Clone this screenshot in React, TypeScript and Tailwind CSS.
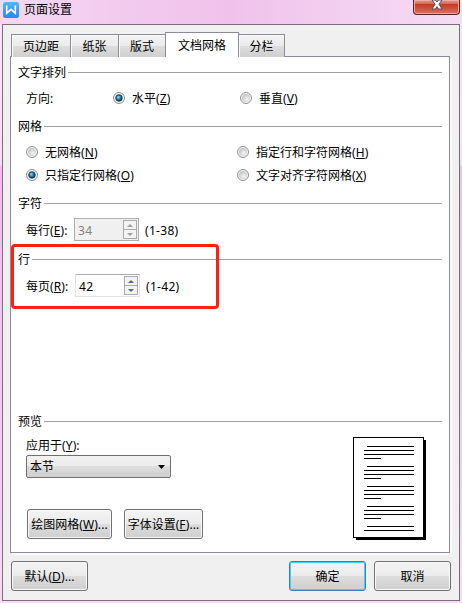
import type { ReactNode } from "react";

function Key({ text, k, tail = "" }: { text: string; k: string; tail?: string }) {
  return (
    <span className="whitespace-nowrap">
      {text}<span className="tracking-[0.1px]">(<span className="underline decoration-1 underline-offset-1">{k}</span>){tail}</span>
    </span>
  );
}

function Group({ title }: { title: string }) {
  return (
    <div className="flex h-4 items-center pr-[7px] pl-[7px]">
      <span className="shrink-0 pt-0.5 whitespace-nowrap">{title}</span>
      <div className="ml-0.5 h-px flex-1 bg-[#a0a0a0]" />
    </div>
  );
}

function Radio({ on = false, children }: { on?: boolean; children: ReactNode }) {
  return (
    <div className="flex h-4 items-center gap-[7px]">
      <svg width="12" height="12" viewBox="0 0 12 12" className="shrink-0">
        <defs>
          <radialGradient id="off" cx="60%" cy="65%" r="60%">
            <stop offset="0" stopColor="#f4f4f4" />
            <stop offset="1" stopColor="#c4c8cc" />
          </radialGradient>
          <radialGradient id="on" cx="40%" cy="38%" r="60%">
            <stop offset="0" stopColor="#9be4f8" />
            <stop offset="0.5" stopColor="#2b86b0" />
            <stop offset="1" stopColor="#0b3554" />
          </radialGradient>
        </defs>
        <circle cx="6" cy="6" r="5.5" fill="#f6f6f6" stroke="#8e8f8f" />
        <circle cx="6" cy="6" r="4" fill="url(#off)" />
        {on && <circle cx="6" cy="6" r="3.2" fill="url(#on)" stroke="#17374f" strokeWidth="0.8" />}
      </svg>
      <span className="pt-0.5">{children}</span>
    </div>
  );
}

function Tab({ className, children }: { className: string; children: ReactNode }) {
  return (
    <div
      className={`flex h-[23px] items-center justify-center border-t border-r border-[#8c8c96] bg-[linear-gradient(#f3f3f3,#ebebeb_49%,#dddddd_50%,#cfcfcf)] pt-0.5 shadow-[inset_1px_1px_0_#fafafa] ${className}`}
    >
      {children}
    </div>
  );
}

function Button({ className, children }: { className: string; children: ReactNode }) {
  return (
    <div
      className={`flex h-[30px] items-center justify-center rounded-[3px] border bg-[linear-gradient(#f3f3f3,#ebebeb_49%,#dddddd_50%,#cfcfcf)] pt-px ${className}`}
    >
      {children}
    </div>
  );
}

function Spinner({ value, disabled = false }: { value: string; disabled?: boolean }) {
  const color = disabled ? "#a0a0a0" : "#4a63b5";
  return (
    <div
      className={`flex h-[23px] w-[65px] items-center justify-between border pr-px pl-[3px] ${disabled ? "border-[#afafaf] bg-[#f0f0f0] text-[#838383]" : "border-[#e2e3ea] border-t-[#abadb3] bg-white"}`}
    >
      <span className="pt-0.5 tracking-[0.3px]">{value}</span>
      <div className="flex h-[19px] w-[14px] flex-col border border-[#ababab] bg-[#f3f3f3]">
        <div className="flex flex-1 items-center justify-center border-b border-[#ababab]">
          <svg width="6" height="3" viewBox="0 0 6 3"><path d="M0 3 3 0 6 3Z" fill={color} /></svg>
        </div>
        <div className="flex flex-1 items-center justify-center">
          <svg width="6" height="3" viewBox="0 0 6 3"><path d="M0 0h6L3 3Z" fill={color} /></svg>
        </div>
      </div>
    </div>
  );
}

function PagePreview() {
  const blocks = [0, 1, 2, 3, 4];
  return (
    <svg width="73" height="103" viewBox="0 0 73 103" shapeRendering="crispEdges">
      <rect x="3" y="3" width="70" height="100" fill="#000" />
      <rect x="0.5" y="0.5" width="70" height="100" fill="#fff" stroke="#000" />
      {blocks.map((b) => (
        <g key={b} transform={`translate(0 ${b * 20})`}>
          <rect x="14" y="9" width="47" height="1" />
          <rect x="11" y="13" width="50" height="1" />
          {b < 4 && <rect x="11" y="17" width="50" height="1" />}
          {b < 4 && <rect x="11" y="21" width="17" height="1" />}
        </g>
      ))}
    </svg>
  );
}

export default function App() {
  return (
    <div className="relative flex h-[603px] w-[462px] flex-col overflow-hidden bg-[linear-gradient(#f3cdf0,#f6d5f4_24px,#f8e4f7_25px,#f8dcf5_165px,#f3bdeb_166px,#f5cdf0_480px,#f7dcf5)] px-0.5 pb-0.5 font-['Noto_Sans','Noto_Sans_CJK_SC',sans-serif] text-[12px] leading-4 text-black">
      <div className="-mx-0.5 flex h-6 shrink-0 items-start justify-between bg-[linear-gradient(90deg,#f5d8f3,#f3cbef_25%,#f0c2eb_50%,#f2caef_65%,#f5dcf4)] pr-[2px] pl-[3px]">
        <div className="flex items-center gap-[5px] pt-0.5">
          <svg width="16" height="16" viewBox="0 0 16 16">
            <defs>
              <linearGradient id="logo" x1="0" y1="0" x2="0" y2="1">
                <stop offset="0" stopColor="#54b5fb" />
                <stop offset="1" stopColor="#2788f5" />
              </linearGradient>
            </defs>
            <rect width="16" height="16" rx="2.5" fill="url(#logo)" />
            <path d="M3.700 3.500v7.700L8 7.400l4.300 3.800V3.500" fill="none" stroke="#fff" strokeWidth="1.600" />
          </svg>
          <span className="whitespace-nowrap">页面设置</span>
        </div>
        <div className="flex h-[15px] w-[47px] justify-center rounded-b-[4px] border border-t-0 border-[#592229] bg-[linear-gradient(#e29b92,#cf6655_30%,#c23a24_32%,#df7160)] shadow-[inset_0_0_0_1px_#f0a99f]">
          <svg width="12" height="11" viewBox="0 0 12 11">
            <path d="M1 0h3.500L6 2 7.500 0H11L8 4.200 11 9H7.500L6 6.700 4.500 9H1L4 4.200Z" fill="#f7f7f7" stroke="#515465" />
          </svg>
        </div>
      </div>

      <div className="flex flex-1 flex-col border border-[#7d6c80] bg-[#f0f0f0] pr-2 pl-[7px]">
        <div className="relative z-10 -mb-px flex h-8 items-end pl-px">
          <Tab className="w-[60px] border-l">页边距</Tab>
          <Tab className="w-12">纸张</Tab>
          <Tab className="w-[46px] border-r-0">版式</Tab>
          <div className="flex h-[25px] w-[74px] items-center justify-center border border-b-0 border-[#8c8c96] bg-white pt-0.5">文档网格</div>
          <Tab className="w-[46px]">分栏</Tab>
        </div>

        <div className="flex h-[497px] w-[440px] flex-col border border-[#8c8c96] bg-white pt-[7px] shadow-[2px_2px_0_#fafafa]">
          <Group title="文字排列" />
          <div className="mt-2.5 flex pl-[15px]">
            <div className="h-4 w-[87px] pt-px">方向:</div>
            <div className="w-[127px]"><Radio on><Key text="水平" k="Z" /></Radio></div>
            <Radio><Key text="垂直" k="V" /></Radio>
          </div>
          <div className="mt-3"><Group title="网格" /></div>
          <div className="mt-2.5 grid grid-cols-[211px_1fr] gap-y-[7px] pl-[15px]">
            <Radio><Key text="无网格" k="N" /></Radio>
            <Radio><Key text="指定行和字符网格" k="H" /></Radio>
            <Radio on><Key text="只指定行网格" k="O" /></Radio>
            <Radio><Key text="文字对齐字符网格" k="X" /></Radio>
          </div>
          <div className="mt-3"><Group title="字符" /></div>
          <div className="mt-[7px] flex h-[23px] items-center pl-[15px]">
            <div className="w-12 pt-0.5"><Key text="每行" k="E" tail=":" /></div>
            <Spinner value="34" disabled />
            <span className="ml-1.5 pt-0.5 tracking-[0.3px]">(1-38)</span>
          </div>
          <div className="mt-2.5"><Group title="行" /></div>
          <div className="mt-[7px] flex h-[23px] items-center pl-[15px]">
            <div className="w-[49px] pt-0.5"><Key text="每页" k="R" tail=":" /></div>
            <Spinner value="42" />
            <span className="ml-1.5 pt-0.5 tracking-[0.3px]">(1-42)</span>
          </div>
          <div className="mt-[116px]"><Group title="预览" /></div>
          <div className="mt-2 flex justify-between pr-[23px] pl-[15px]">
            <div className="flex flex-col">
              <div className="h-4 pt-px"><Key text="应用于" k="Y" tail=":" /></div>
              <div className="mt-[2px] flex h-[23px] w-[145px] items-center justify-between rounded-[2px] border border-[#707070] bg-[linear-gradient(#f2f2f2,#ebebeb_49%,#dddddd_50%,#cfcfcf)] pr-[5px] pl-[3px]">
                <span>本节</span>
                <svg width="7" height="4" viewBox="0 0 7 4"><path d="M0 0h7L3.500 4Z" /></svg>
              </div>
              <div className="mt-[31px] flex gap-3 pl-px">
                <Button className="w-[85px] border-[#707070] shadow-[inset_0_0_0_1px_#fafafa]"><Key text="绘图网格" k="W" tail="..." /></Button>
                <Button className="w-[79px] border-[#707070] shadow-[inset_0_0_0_1px_#fafafa]"><Key text="字体设置" k="F" tail="..." /></Button>
              </div>
            </div>
            <PagePreview />
          </div>
        </div>

        <div className="mt-2 flex pl-px">
          <Button className="w-[77px] border-[#707070] shadow-[inset_0_0_0_1px_#fafafa]"><Key text="默认" k="D" tail="..." /></Button>
          <Button className="ml-[201px] w-[77px] border-[#3c7fb1] shadow-[inset_0_0_0_1px_#43d0f5]">确定</Button>
          <Button className="ml-2 w-[77px] border-[#707070] shadow-[inset_0_0_0_1px_#fafafa]">取消</Button>
        </div>
      </div>

      <div className="absolute top-[244px] left-[11px] h-[65px] w-[208px] rounded-[4px] border-[3px] border-[#ff2015]" />
    </div>
  );
}
